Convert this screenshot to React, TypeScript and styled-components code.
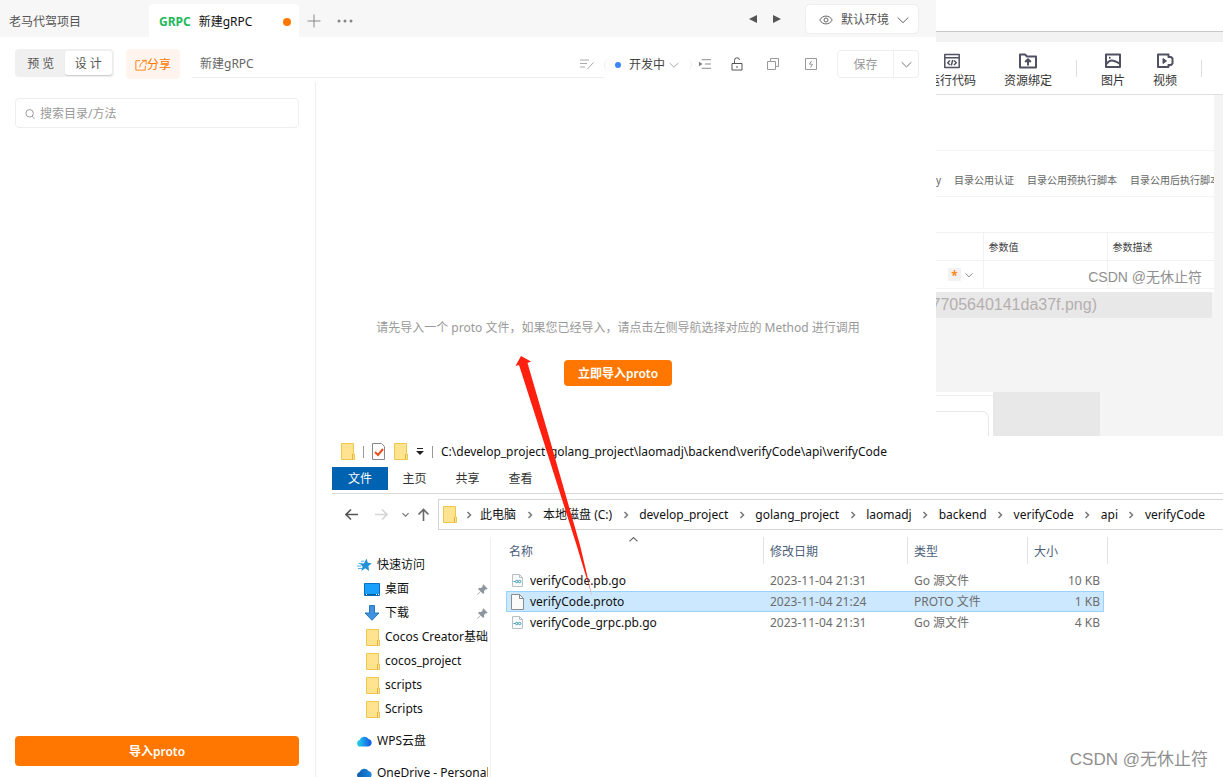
import React from "react";
import styled, { createGlobalStyle, css } from "styled-components";

const orange = "#ff7700";

const GlobalStyle = createGlobalStyle`
  * { box-sizing: border-box; }
  body {
    margin: 0;
    background: #fff;
    color: #666;
    font-family: "Noto Sans", "Noto Sans CJK SC", sans-serif;
    font-size: 12px;
    line-height: 16px;
  }
  button, input {
    font: inherit;
    color: inherit;
    margin: 0;
    padding: 0;
    border: 0;
    background: none;
  }
  svg { display: block; flex: none; }
`;

const Page = styled.div`
  position: relative;
  display: grid;
  grid-template-columns: 316px minmax(0, 1fr) 287px;
  grid-template-rows: auto 354px minmax(0, 1fr);
  grid-template-areas: "head head back" "side main back" "side files files";
  height: 100vh;
  min-height: 620px;
  overflow: hidden;
`;

/* ---------- API client header ---------- */

const Header = styled.header`
  grid-area: head;
  min-width: 0;
`;

const TabBar = styled.nav`
  display: flex;
  align-items: flex-end;
  height: 37px;
  padding-right: 17px;
  background: #f7f7f7;
`;

const Tab = styled.button<{ $active?: boolean }>`
  display: flex;
  align-items: center;
  height: 33px;
  width: ${(p) => (p.$active ? 150 : 149)}px;
  padding: 2px 8px 0 ${(p) => (p.$active ? 10 : 9)}px;
  gap: 8px;
  border-radius: 4px 4px 0 0;
  background: ${(p) => (p.$active ? "#fff" : "transparent")};
  color: ${(p) => (p.$active ? "#111" : "#555")};
  white-space: nowrap;
`;

const Method = styled.b`
  color: #1fb95b;
`;

const Dot = styled.i<{ $color: string; $size: number }>`
  width: ${(p) => p.$size}px;
  height: ${(p) => p.$size}px;
  border-radius: 50%;
  background: ${(p) => p.$color};
`;

const Push = styled.span`
  flex: 1;
`;

const IconButton = styled.button<{ $w: number; $h?: number }>`
  display: flex;
  align-items: center;
  justify-content: center;
  width: ${(p) => p.$w}px;
  height: ${(p) => p.$h ?? 28}px;
  flex: none;
`;

const EnvButton = styled.button`
  display: flex;
  align-items: center;
  gap: 8px;
  height: 30px;
  margin: 0 0 3px 16px;
  padding: 1px 9px 0 13px;
  border: 1px solid #eee;
  border-radius: 5px;
  background: #fff;
  color: #555;
  white-space: nowrap;
`;

const Toolbar = styled.div`
  display: flex;
  align-items: flex-start;
  height: 45px;
  padding: 9px 17px 0 15px;
`;

const Segmented = styled.div`
  display: flex;
  width: 99px;
  height: 28px;
  margin-top: 3px;
  padding: 2px;
  border-radius: 4px;
  background: #f0f0f0;
`;

const Segment = styled.button<{ $active?: boolean }>`
  flex: 1;
  padding-top: 1px;
  border-radius: 3px;
  color: #555;
  white-space: pre;
  ${(p) =>
    p.$active &&
    css`
      background: #fff;
      box-shadow: 0 1px 1px rgba(0, 0, 0, 0.15);
    `}
`;

const ShareButton = styled.button`
  display: flex;
  align-items: center;
  justify-content: center;
  width: 54px;
  height: 30px;
  margin: 3px 12px 0;
  padding-top: 1px;
  border-radius: 4px;
  background: #fff5ee;
  color: ${orange};
  white-space: nowrap;
`;

const NameField = styled.label`
  display: flex;
  align-items: center;
  flex: 1;
  min-width: 0;
  height: 32px;
  padding: 5px 10px 0 8px;
  border-bottom: 1px solid #eee;
  input {
    flex: 1;
    min-width: 0;
    outline: 0;
  }
`;

const StatusButton = styled.button`
  display: flex;
  align-items: center;
  gap: 8px;
  width: 88px;
  height: 12px;
  margin-top: 13px;
  padding: 0 10px;
  border: solid #eee;
  border-width: 0 1px;
  border-radius: 6px;
  color: #444;
  white-space: nowrap;
  svg { margin-left: -4px; }
`;

const ToolIcons = styled.div`
  display: flex;
  margin: 4px 12px 0 -6px;
`;

const SaveGroup = styled.div`
  display: flex;
  width: 82px;
  height: 28px;
  margin-top: 4px;
  border: 1px solid #eee;
  border-radius: 4px;
`;

const SaveButton = styled.button`
  flex: 1;
  padding-top: 1px;
  border-right: 1px solid #eee;
  color: #999;
`;

/* ---------- sidebar and main ---------- */

const Sidebar = styled.aside`
  grid-area: side;
  display: flex;
  flex-direction: column;
  justify-content: space-between;
  padding: 16px 16px 11px 15px;
  border-right: 1px solid #eee;
`;

const Search = styled.label`
  display: flex;
  align-items: center;
  gap: 5px;
  height: 30px;
  padding: 2px 9px 0;
  border: 1px solid #eee;
  border-radius: 4px;
  input {
    flex: 1;
    min-width: 0;
    outline: 0;
  }
  input::placeholder { color: #999; opacity: 1; }
`;

const PrimaryButton = styled.button<{ $small?: boolean }>`
  height: ${(p) => (p.$small ? 26 : 30)}px;
  padding: 2px 14px 0;
  border-radius: 4px;
  background: ${orange};
  color: #fff;
  font-weight: 600;
`;

const Main = styled.main`
  grid-area: main;
  display: flex;
  flex-direction: column;
  align-items: center;
  gap: 24px;
  padding: 238px 16px 0 0;
  min-width: 0;
  color: #999;
`;

const Hint = styled.p`
  margin: 0;
  white-space: nowrap;
`;

/* ---------- editor panel on the right ---------- */

const Back = styled.section`
  grid-area: back;
  display: flex;
  flex-direction: column;
  background: #f4f4f4;
  overflow: hidden;
`;

const BackTop = styled.div`
  height: 42px;
  padding-top: 31px;
  background: #fff;
  &::after {
    content: "";
    display: block;
    height: 11px;
    border-top: 1px solid #c8c8c8;
    border-bottom: 1px solid #ddd;
    background: #f2f2f2;
  }
`;

const BackTools = styled.div`
  display: flex;
  align-items: center;
  justify-content: flex-end;
  gap: 24px;
  height: 53px;
  padding-right: 21px;
  border-bottom: 1px solid #e0e0e0;
  background: #fff;
`;

const ToolGroup = styled.div`
  display: flex;
  gap: 28px;
`;

const BackTool = styled.button`
  display: flex;
  flex-direction: column;
  align-items: center;
  gap: 4px;
  flex: none;
  padding-top: 5px;
  color: #333;
  white-space: nowrap;
`;

const Divider = styled.i<{ $h: number; $color?: string }>`
  flex: none;
  width: 1px;
  height: ${(p) => p.$h}px;
  background: ${(p) => p.$color ?? "#ddd"};
`;

const Doc = styled.div`
  margin-right: 9px;
  padding-top: 55px;
  height: 197px;
  background: #fff;
  overflow: hidden;
  font-size: 10px;
`;

const DocTabs = styled.div`
  display: flex;
  align-items: center;
  gap: 13px;
  height: 47px;
  padding-top: 12px;
  border-top: 1px solid #f4f4f4;
  border-bottom: 1px solid #f4f4f4;
  white-space: nowrap;
`;

const Params = styled.table`
  width: 100%;
  margin-top: 35px;
  border-collapse: collapse;
  table-layout: fixed;
  th, td {
    height: 28px;
    padding: 0 5px;
    border: 1px solid #f2f2f2;
    border-width: 1px 0 1px 1px;
    text-align: left;
    font-weight: 400;
    color: #444;
  }
  th:first-child, td:first-child { border-left: 0; width: 47px; }
  th:nth-child(2) { width: 124px; }
`;

const Required = styled.div`
  display: flex;
  align-items: center;
  gap: 4px;
  margin-left: 7px;
  b {
    width: 13px;
    height: 13px;
    line-height: 16px;
    background: #f2f2f2;
    color: #ff8a1f;
    text-align: center;
    font-size: 12px;
  }
`;

const ImageLink = styled.div`
  display: flex;
  align-items: center;
  justify-content: flex-end;
  height: 26px;
  margin-right: 11px;
  padding-right: 115px;
  border-radius: 0 2px 2px 0;
  background: #e8e8e8;
  color: #b5afaf;
  font-family: "Liberation Sans", sans-serif;
  font-size: 16px;
`;

const Fragments = styled.div`
  display: flex;
  height: 44px;
  margin-top: auto;
`;

const CardEdge = styled.div`
  width: 57px;
  padding: 16px 4px 0 0;
  border-top: 3px solid #fff;
  background: #fff;
  box-shadow: inset 0 1px #eee;
  &::after {
    content: "";
    display: block;
    height: 25px;
    border: solid #e8e8e8;
    border-width: 1px 1px 0 0;
    border-radius: 0 7px 0 0;
  }
`;

const Block = styled.div`
  width: 107px;
  background: #e8e8e8;
`;

const Watermark = styled.span<{ $size: number; $x: number; $top?: number; $bottom?: number }>`
  position: absolute;
  right: ${(p) => p.$x}px;
  ${(p) => (p.$top !== undefined ? `top: ${p.$top}px;` : `bottom: ${p.$bottom}px;`)}
  color: #8f8f8f;
  font-family: "Liberation Sans", "Noto Sans CJK SC", sans-serif;
  font-size: ${(p) => p.$size}px;
  line-height: 20px;
  white-space: nowrap;
`;

/* ---------- file explorer ---------- */

const Explorer = styled.section`
  grid-area: files;
  display: flex;
  flex-direction: column;
  padding-left: 16px;
  min-width: 0;
  color: #111;
  overflow: hidden;
`;

const TitleBar = styled.div`
  display: flex;
  align-items: center;
  flex: none;
  gap: 8px;
  height: 31px;
  padding-left: 9px;
  white-space: nowrap;
`;

const Ribbon = styled.div`
  display: flex;
  flex: none;
  height: 27px;
  border-bottom: 1px solid #d9d9d9;
`;

const RibbonTab = styled.button<{ $file?: boolean }>`
  width: ${(p) => (p.$file ? 56 : 53)}px;
  height: 23px;
  padding-top: 1px;
  background: ${(p) => (p.$file ? "#0063b1" : "transparent")};
  color: ${(p) => (p.$file ? "#fff" : "#333")};
`;

const AddressRow = styled.div`
  display: flex;
  align-items: center;
  flex: none;
  height: 41px;
  padding: 0 0 0 9px;
`;

const Address = styled.ol`
  display: flex;
  align-items: center;
  flex: 1;
  height: 31px;
  margin: 0;
  padding: 0 0 0 4px;
  border: solid #d5d5d5;
  border-width: 1px 0 1px 1px;
  list-style: none;
  white-space: nowrap;
  overflow: hidden;
`;

const CrumbArrow = styled.span`
  display: flex;
  justify-content: center;
  width: 27px;
`;

const Crumb = styled.li`
  display: flex;
  align-items: center;
  flex: none;
  a {
    color: inherit;
    text-decoration: none;
  }
  &:first-of-type ${CrumbArrow} { width: 23px; }
`;

const Body = styled.div`
  display: flex;
  flex: 1;
  min-height: 0;
  padding-top: 2px;
`;

const Places = styled.ul`
  width: 159px;
  margin: 0;
  padding: 16px 0 0;
  border-right: 1px solid #f0f0f0;
  list-style: none;
  overflow: hidden;
`;

const Place = styled.li<{ $root?: boolean; $spaced?: boolean }>`
  display: flex;
  align-items: center;
  height: 24px;
  margin: ${(p) => (p.$spaced ? 8 : 0)}px 2px 0 0;
  padding-left: ${(p) => (p.$root ? 24 : 32)}px;
  gap: 5px;
  white-space: nowrap;
  overflow: hidden;
`;

const PlaceIcon = styled.span`
  display: flex;
  justify-content: flex-end;
  flex: none;
  width: 16px;
`;

const FileArea = styled.div`
  padding-left: 15px;
`;

const Files = styled.table`
  width: 602px;
  border-collapse: separate;
  border-spacing: 0;
  table-layout: fixed;
  white-space: nowrap;
`;

const HeadCell = styled.th<{ $first?: boolean }>`
  position: relative;
  height: 27px;
  padding: 2px 0 0 ${(p) => (p.$first ? 3 : 6)}px;
  border-right: 1px solid #e2e2e2;
  color: #4c607a;
  font-weight: 400;
  text-align: left;
  svg {
    position: absolute;
    top: -2px;
    left: 48%;
  }
`;

const SpacerRow = styled.tr`
  height: 6px;
`;

const FileRow = styled.tr<{ $selected?: boolean }>`
  td {
    height: 21px;
    padding: 0 0 0 6px;
    border: 0 solid #99d1ff;
    color: #6d6d6d;
  }
  td:first-child { color: #111; padding-left: 5px; }
  td:nth-child(4) { text-align: right; padding: 0 4px 0 0; }
  ${(p) =>
    p.$selected &&
    css`
      td:not(:last-child) {
        background: #cce8ff;
        border-width: 1px 0;
      }
      td:first-child { border-left-width: 1px; padding-left: 4px; }
      td:nth-child(4) { border-right-width: 1px; padding-right: 3px; }
    `}
`;

const FileName = styled.span`
  display: flex;
  align-items: center;
  gap: 6px;
`;

const Arrow = styled.svg`
  position: absolute;
  top: 350px;
  left: 510px;
  pointer-events: none;
`;

/* ---------- icons ---------- */

const Chevron = ({ size = 12, color = "#666", dir = "down", w = 1 }: { size?: number; color?: string; dir?: "down" | "right" | "up"; w?: number }) => (
  <svg width={size} height={size} viewBox="0 0 12 12" fill="none" stroke={color} strokeWidth={w}>
    <path d={dir === "down" ? "M0.7 3.5 6 8.7 11.3 3.5" : dir === "up" ? "M0.7 8.5 6 3.3 11.3 8.5" : "M4.5 3 7.5 6 4.5 9"} />
  </svg>
);

const Folder = () => (
  <svg width="14" height="17" viewBox="0 0 14 17">
    <path d="M.5.5h12v10.5h1v5.5H.5z" fill="#ffe38f" stroke="#ecc64e" />
    <path d="M11.5 11v5" stroke="#e0b437" />
  </svg>
);

const FileIcon = ({ go }: { go?: boolean }) => (
  <svg width="13" height="16" viewBox="0 0 13 16">
    <path d={go ? "M1.5 1.5h7l3 3v9h-10z" : "M.5.5h8l4 4v11H.5z"} fill={go ? "#f8fafb" : "#fafafa"} stroke={go ? "#b9c0c4" : "#8b8b8b"} />
    <path d={go ? "M8.5 1.5v3h3" : "M8.5.5v4h4"} fill="none" stroke={go ? "#b9c0c4" : "#8b8b8b"} />
    {go && (
      <g fill="none" stroke="#3d9dbb">
        <path d="M2.5 8.5h1.5" />
        <circle cx="5.7" cy="8.5" r="1.2" />
        <circle cx="8.6" cy="8.5" r="1.2" />
      </g>
    )}
  </svg>
);

const Pin = () => (
  <svg width="11" height="11" viewBox="0 0 11 11" fill="#8d979f">
    <path d="M6.3.3 10.7 4.7 9.5 5.4 8.8 5.2 7 7l.1 2.1-1 .9L3.7 7.6.8 10.800l-.6-.6L3.4 7.300 1 4.900l.9-1L4 4 5.800 2.200 5.600 1.500z" />
  </svg>
);

const Star = () => (
  <svg width="15" height="14" viewBox="0 0 15 14">
    <path d="M9.5.5 10.8 4.8 14.7 5.2 11.5 7.9 12 13 8.3 10.3 4.4 13 5.6 8.5 3 5.8 7 5.2z" fill="#2391d8" />
    <path d="M1.5 5.5h4M0 8h4M1 10.5h4M4 3.2h3" stroke="#55afe6" />
  </svg>
);

const Desktop = () => (
  <svg width="16" height="13" viewBox="0 0 16 13">
    <path d="M.5.5h15v12H.5z" fill="#18a0fb" stroke="#0b6fc0" />
    <path d="M1 11.5h14" stroke="#075a9e" />
    <path d="M2 11.5h1M12 11.5h1M14 11.5h1" stroke="#fff" />
  </svg>
);

const Download = () => (
  <svg width="16" height="16" viewBox="0 0 16 16">
    <path d="M5.5.5h5v7.5h4.5L8 15.3 1 8h4.5z" fill="#3f92dd" stroke="#2b78bf" />
  </svg>
);

const Cloud = ({ wps }: { wps?: boolean }) => (
  <svg width="15" height="12" viewBox="0 0 15 12">
    <defs>
      <linearGradient id={wps ? "wps" : "one"}>
        <stop offset="0" stopColor={wps ? "#1fd6e8" : "#0b5cad"} />
        <stop offset="1" stopColor={wps ? "#1450e8" : "#1f8ae0"} />
      </linearGradient>
    </defs>
    <path d="M3.5 11.5A3.3 3.3 0 0 1 2.6 5 5 5 0 0 1 11.5 4 3.8 3.8 0 0 1 11.3 11.5z" fill={`url(#${wps ? "wps" : "one"})`} />
  </svg>
);

const NavArrow = ({ kind, color = "#555" }: { kind: "back" | "forward" | "up"; color?: string }) => (
  <svg width="13" height="13" viewBox="0 0 13 13" fill="none" stroke={color} strokeWidth="1.6">
    <path d={{ back: "M13 6.5H1M6 1.5l-5 5 5 5", forward: "M0 6.5h12M7 1.5l5 5-5 5", up: "M6.5 13V1.5M1.5 6.5l5-5 5 5" }[kind]} />
  </svg>
);

const Line: React.FC<{ size?: number; color?: string; children: React.ReactNode }> = ({ size = 14, color = "#999", children }) => (
  <svg width={size} height={size} viewBox="0 0 14 14" fill="none" stroke={color} strokeWidth="1">
    {children}
  </svg>
);

const Heavy: React.FC<{ children: React.ReactNode }> = ({ children }) => (
  <svg width="18" height="16" viewBox="0 0 18 16" fill="none" stroke="#4f5062" strokeWidth="2" strokeLinejoin="round">
    {children}
  </svg>
);

/* ---------- data ---------- */

const crumbs = ["此电脑", "本地磁盘 (C:)", "develop_project", "golang_project", "laomadj", "backend", "verifyCode", "api", "verifyCode"];

const places = [
  { name: "快速访问", icon: <Star />, root: true },
  { name: "桌面", icon: <Desktop />, pinned: true },
  { name: "下载", icon: <Download />, pinned: true },
  { name: "Cocos Creator基础", icon: <Folder /> },
  { name: "cocos_project", icon: <Folder /> },
  { name: "scripts", icon: <Folder /> },
  { name: "Scripts", icon: <Folder /> },
  { name: "WPS云盘", icon: <Cloud wps />, root: true, spaced: true },
  { name: "OneDrive - Personal", icon: <Cloud />, root: true, spaced: true },
];

const files = [
  { name: "verifyCode.pb.go", date: "2023-11-04 21:31", type: "Go 源文件", size: "10 KB", go: true },
  { name: "verifyCode.proto", date: "2023-11-04 21:24", type: "PROTO 文件", size: "1 KB", selected: true },
  { name: "verifyCode_grpc.pb.go", date: "2023-11-04 21:31", type: "Go 源文件", size: "4 KB", go: true },
];

export default function App() {
  return (
    <>
      <GlobalStyle />
      <Page>
        <Header>
          <TabBar>
            <Tab>老马代驾项目</Tab>
            <Tab $active>
              <Method>GRPC</Method>
              新建gRPC
              <Push />
              <Dot $color={orange} $size={8} />
            </Tab>
            <IconButton $w={30} $h={33} aria-label="新建">
              <Line size={14} color="#888"><path d="M7 .5v13M.5 7h13" /></Line>
            </IconButton>
            <IconButton $w={32} $h={33} aria-label="更多">
              <svg width="16" height="4" viewBox="0 0 16 4" fill="#888"><circle cx="2" cy="2" r="1.5" /><circle cx="8" cy="2" r="1.5" /><circle cx="14" cy="2" r="1.5" /></svg>
            </IconButton>
            <Push />
            <IconButton $w={24} $h={36} aria-label="上一个">
              <svg width="8" height="8" viewBox="0 0 8 8" fill="#555"><path d="M8 0v8L0 4z" /></svg>
            </IconButton>
            <IconButton $w={24} $h={36} aria-label="下一个">
              <svg width="8" height="8" viewBox="0 0 8 8" fill="#555"><path d="M0 0v8l8-4z" /></svg>
            </IconButton>
            <EnvButton>
              <Line color="#666"><path d="M.8 7C3.5 1.8 10.5 1.8 13.2 7 10.5 12.2 3.5 12.2.8 7z" /><circle cx="7" cy="7" r="2" /></Line>
              默认环境
              <Chevron />
            </EnvButton>
          </TabBar>
          <Toolbar>
            <Segmented>
              <Segment>预 览</Segment>
              <Segment $active>设 计</Segment>
            </Segmented>
            <ShareButton>
              <Line size={12} color={orange}><path d="M6 2H1v11h11V8M8 1.5h5v5M13 1.5C9 3 6 5 5.5 9.5" /></Line>
              分享
            </ShareButton>
            <NameField>
              <input aria-label="接口名称" defaultValue="新建gRPC" />
              <Line size={14} color="#aaa"><path d="M0 3h9M0 6.5h7M0 10h5M13.5 5.5 7.5 12" /></Line>
            </NameField>
            <StatusButton>
              <Dot $color="#3a86ff" $size={6} />
              开发中
              <Chevron size={10} color="#999" />
            </StatusButton>
            <ToolIcons>
              <IconButton $w={37} aria-label="缩进"><Line size={12} color="#777"><path d="M3 2h11M7 7h7M3 12h11" /><path d="M0 4.5 4 7 0 9.5z" fill="#777" stroke="none" /></Line></IconButton>
              <IconButton $w={27} aria-label="锁定"><Line color="#555"><path d="M2 6.5h10v6.5H2zM4.5 6.5v-3A2.5 2.5 0 0 1 9.5 3M7 9v2" /></Line></IconButton>
              <IconButton $w={46} aria-label="复制"><Line><path d="M1.5 4.5h8v8h-8zM4.5 4.5v-3h8v8h-3" /></Line></IconButton>
              <IconButton $w={29} aria-label="快捷请求"><Line><path d="M1.5 1.5h11v11h-11zM7.5 4 5.5 7.2h3L6.5 10.5" /></Line></IconButton>
            </ToolIcons>
            <SaveGroup>
              <SaveButton>保存</SaveButton>
              <IconButton $w={24} $h={26} aria-label="更多保存选项"><Chevron size={11} /></IconButton>
            </SaveGroup>
          </Toolbar>
        </Header>

        <Sidebar>
          <Search>
            <Line size={10} color="#777"><circle cx="6.5" cy="6" r="5.2" /><path d="m10 10 3 3.5" /></Line>
            <input aria-label="搜索" placeholder="搜索目录/方法" />
          </Search>
          <PrimaryButton>导入proto</PrimaryButton>
        </Sidebar>

        <Main>
          <Hint>请先导入一个 proto 文件，如果您已经导入，请点击左侧导航选择对应的 Method 进行调用</Hint>
          <PrimaryButton $small>立即导入proto</PrimaryButton>
        </Main>

        <Back>
          <BackTop />
          <BackTools>
            <ToolGroup>
              <BackTool>
                <Heavy><g strokeWidth="1.5"><path d="M1.8 1.5h14.4v13H1.8zM2 4.7h14M7 7.5 4.7 9.7 7 12M11 7.5l2.3 2.2L11 12M9.7 7 8.3 12.5" /></g></Heavy>
                运行代码
              </BackTool>
              <BackTool>
                <Heavy><path d="M1 1.5h5l2 2h9v11H1zM9 12.5v-6M6.2 9 9 6.2 11.8 9" /></Heavy>
                资源绑定
              </BackTool>
            </ToolGroup>
            <Divider $h={17} />
            <ToolGroup>
              <BackTool>
                <Heavy><path d="M2 1.5h14v12.5H2zM2.5 11C6 6 9 7 15.5 10.5M5 4.8h1.5" /></Heavy>
                图片
              </BackTool>
              <BackTool>
                <Heavy><path d="M2 1.5h10.5v2.5h2.5l1.5 1.5v5L15 12h-2.5v2H2z" /><path d="M7 5.5v5l3.5-2.5z" fill="#4f5062" strokeWidth="1" /></Heavy>
                视频
              </BackTool>
            </ToolGroup>
            <Divider $h={17} />
          </BackTools>
          <Doc>
            <DocTabs>
              <span>y</span>
              <span>目录公用认证</span>
              <span>目录公用预执行脚本</span>
              <span>目录公用后执行脚本</span>
            </DocTabs>
            <Params>
              <thead>
                <tr><th /><th>参数值</th><th>参数描述</th></tr>
              </thead>
              <tbody>
                <tr>
                  <td><Required><b>*</b><Chevron size={8} color="#888" w={1.5} /></Required></td>
                  <td />
                  <td />
                </tr>
              </tbody>
            </Params>
          </Doc>
          <ImageLink>7705640141da37f.png)</ImageLink>
          <Fragments>
            <CardEdge />
            <Block />
          </Fragments>
        </Back>

        <Explorer>
          <TitleBar>
            <Folder />
            <Divider $h={12} $color="#999" />
            <svg width="14" height="17" viewBox="1 0 14 17">
              <path d="M1.500.5h9l3 3v13h-12z" fill="#fff" stroke="#888" />
              <path d="m4 9 3 3 5-6" fill="none" stroke="#e8501f" strokeWidth="2" />
            </svg>
            <Folder />
            <svg width="8" height="8" viewBox="0 0 8 8" fill="#222"><path d="M1 0h6v1H1zM0 3h8L4 7z" /></svg>
            <Divider $h={12} $color="#999" />
            <span>C:\develop_project\golang_project\laomadj\backend\verifyCode\api\verifyCode</span>
          </TitleBar>
          <Ribbon>
            <RibbonTab $file>文件</RibbonTab>
            <RibbonTab>主页</RibbonTab>
            <RibbonTab>共享</RibbonTab>
            <RibbonTab>查看</RibbonTab>
          </Ribbon>
          <AddressRow>
            <IconButton $w={20} aria-label="后退"><NavArrow kind="back" /></IconButton>
            <IconButton $w={40} aria-label="前进"><NavArrow kind="forward" color="#d5d5d5" /></IconButton>
            <IconButton $w={8} aria-label="最近位置"><Chevron size={7} w={2} color="#777" /></IconButton>
            <IconButton $w={29} aria-label="向上"><NavArrow kind="up" color="#666" /></IconButton>
            <Address>
              <Folder />
              {crumbs.map((c, i) => (
                <Crumb key={i}>
                  <CrumbArrow><Chevron dir="right" color="#777" w={1.5} /></CrumbArrow>
                  <a href="#">{c}</a>
                </Crumb>
              ))}
            </Address>
          </AddressRow>
          <Body>
            <Places>
              {places.map((p) => (
                <Place key={p.name} $root={p.root} $spaced={p.spaced}>
                  <PlaceIcon>{p.icon}</PlaceIcon>
                  <span>{p.name}</span>
                  {p.pinned && (
                    <>
                      <Push />
                      <Pin />
                    </>
                  )}
                </Place>
              ))}
            </Places>
            <FileArea>
              <Files>
                <colgroup>
                  <col width="258" />
                  <col width="144" />
                  <col width="120" />
                  <col width="76" />
                  <col width="4" />
                </colgroup>
                <thead>
                  <tr>
                    <HeadCell $first>名称<Chevron dir="up" size={9} w={1.5} /></HeadCell>
                    <HeadCell>修改日期</HeadCell>
                    <HeadCell>类型</HeadCell>
                    <HeadCell colSpan={2}>大小</HeadCell>
                  </tr>
                </thead>
                <tbody>
                  <SpacerRow />
                  {files.map((f) => (
                    <FileRow key={f.name} $selected={f.selected}>
                      <td><FileName><FileIcon go={f.go} />{f.name}</FileName></td>
                      <td>{f.date}</td>
                      <td>{f.type}</td>
                      <td>{f.size}</td>
                      <td />
                    </FileRow>
                  ))}
                </tbody>
              </Files>
            </FileArea>
          </Body>
        </Explorer>

        <Arrow width="90" height="255" viewBox="510 350 90 255">
          <defs>
            <linearGradient id="fade" x1="0" y1="0" x2="0" y2="1">
              <stop offset="0.9" stopColor="#ff2010" />
              <stop offset="1" stopColor="#ff2010" stopOpacity="0.3" />
            </linearGradient>
          </defs>
          <path d="M521 356 531 361.5 527.5 363 548.5 435 580 545 592.5 598 576.5 545 541.5 435 519 365 515.5 366z" fill="url(#fade)" />
        </Arrow>
        <Watermark $size={14} $x={21} $top={267}>CSDN @无休止符</Watermark>
        <Watermark $size={17} $x={15} $bottom={7}>CSDN @无休止符</Watermark>
      </Page>
    </>
  );
}
